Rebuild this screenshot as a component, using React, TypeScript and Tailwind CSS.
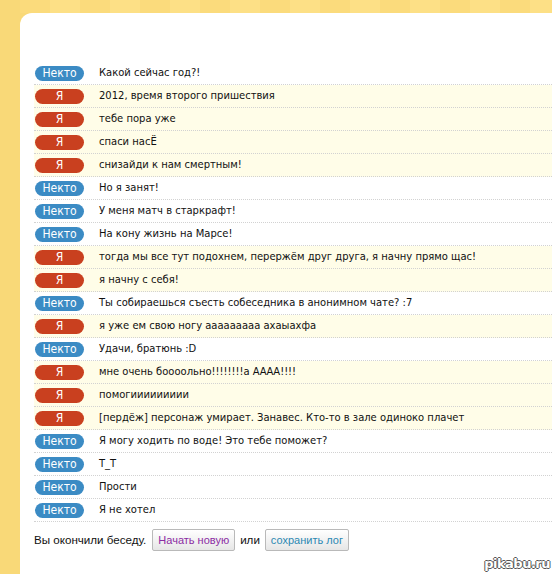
import React from "react";

type Msg = { me: boolean; text: string };

const msgs: Msg[] = [
  { me: false, text: "Какой сейчас год?!" },
  { me: true, text: "2012, время второго пришествия" },
  { me: true, text: "тебе пора уже" },
  { me: true, text: "спаси насЁ" },
  { me: true, text: "снизайди к нам смертным!" },
  { me: false, text: "Но я занят!" },
  { me: false, text: "У меня матч в старкрафт!" },
  { me: false, text: "На кону жизнь на Марсе!" },
  { me: true, text: "тогда мы все тут подохнем, перержём друг друга, я начну прямо щас!" },
  { me: true, text: "я начну с себя!" },
  { me: false, text: "Ты собираешься съесть собеседника в анонимном чате? :7" },
  { me: true, text: "я уже ем свою ногу ааааааааа ахаыахфа" },
  { me: false, text: "Удачи, братюнь :D" },
  { me: true, text: "мне очень боооольно!!!!!!!!а АААА!!!!" },
  { me: true, text: "помогиииииииии" },
  { me: true, text: "[пердёж] персонаж умирает. Занавес. Кто-то в зале одиноко плачет" },
  { me: false, text: "Я могу ходить по воде! Это тебе поможет?" },
  { me: false, text: "Т_Т" },
  { me: false, text: "Прости" },
  { me: false, text: "Я не хотел" },
];

export default function App() {
  return (
    <div className="relative w-[552px] h-[574px] overflow-hidden bg-[#f9d978] flex flex-col">
      <div className="h-[13px] shrink-0 ml-[20px] bg-[repeating-linear-gradient(90deg,#fbdb7c_0px,#fbdb7c_30px,#fde086_30px,#fde086_60px)]" />
      <div className="flex-1 ml-[20px] bg-white rounded-tl-[12px] pt-[49px] pl-[14px] font-['DejaVu_Sans_Condensed',sans-serif]">
        <div className="flex flex-col">
          {msgs.map((m, i) => (
            <div
              key={i}
              className={
                "flex items-center h-[23px] border-b border-dotted border-[#d2d2d2] " +
                (m.me ? "bg-[#fffde8]" : "bg-white")
              }
            >
              <span
                className={
                  "ml-[1px] w-[49px] h-[15px] rounded-full text-white text-[12px] leading-[15px] text-center shrink-0 " +
                  (m.me ? "bg-[#c9401f]" : "bg-[#3b8bc4]")
                }
              >
                {m.me ? "Я" : "Некто"}
              </span>
              <span className="ml-[15px] text-[11.1px] text-[#111] whitespace-nowrap">{m.text}</span>
            </div>
          ))}
        </div>
        <div className="flex items-center mt-[7px] font-['Liberation_Sans',sans-serif] text-[11.6px] text-[#111]">
          <span>Вы окончили беседу.</span>
          <span className="ml-[6px] h-[22px] px-[5px] flex items-center border border-[#b9b9b9] rounded-[2px] bg-[linear-gradient(#ffffff,#e6e6e6)] text-[11px] text-[#8b2ca3]">
            Начать новую
          </span>
          <span className="ml-[5px]">или</span>
          <span className="ml-[5px] h-[22px] px-[5px] flex items-center border border-[#b9b9b9] rounded-[2px] bg-[linear-gradient(#ffffff,#e6e6e6)] text-[11px] text-[#2b88b2]">
            сохранить лог
          </span>
        </div>
      </div>
      <div className="absolute right-[2px] bottom-[1px] text-[13px] font-bold text-white font-['DejaVu_Sans',sans-serif] tracking-[-0.5px] [text-shadow:1px_0_0_#555,-1px_0_0_#555,0_1px_0_#555,0_-1px_0_#555]">
        pikabu.ru
      </div>
    </div>
  );
}
